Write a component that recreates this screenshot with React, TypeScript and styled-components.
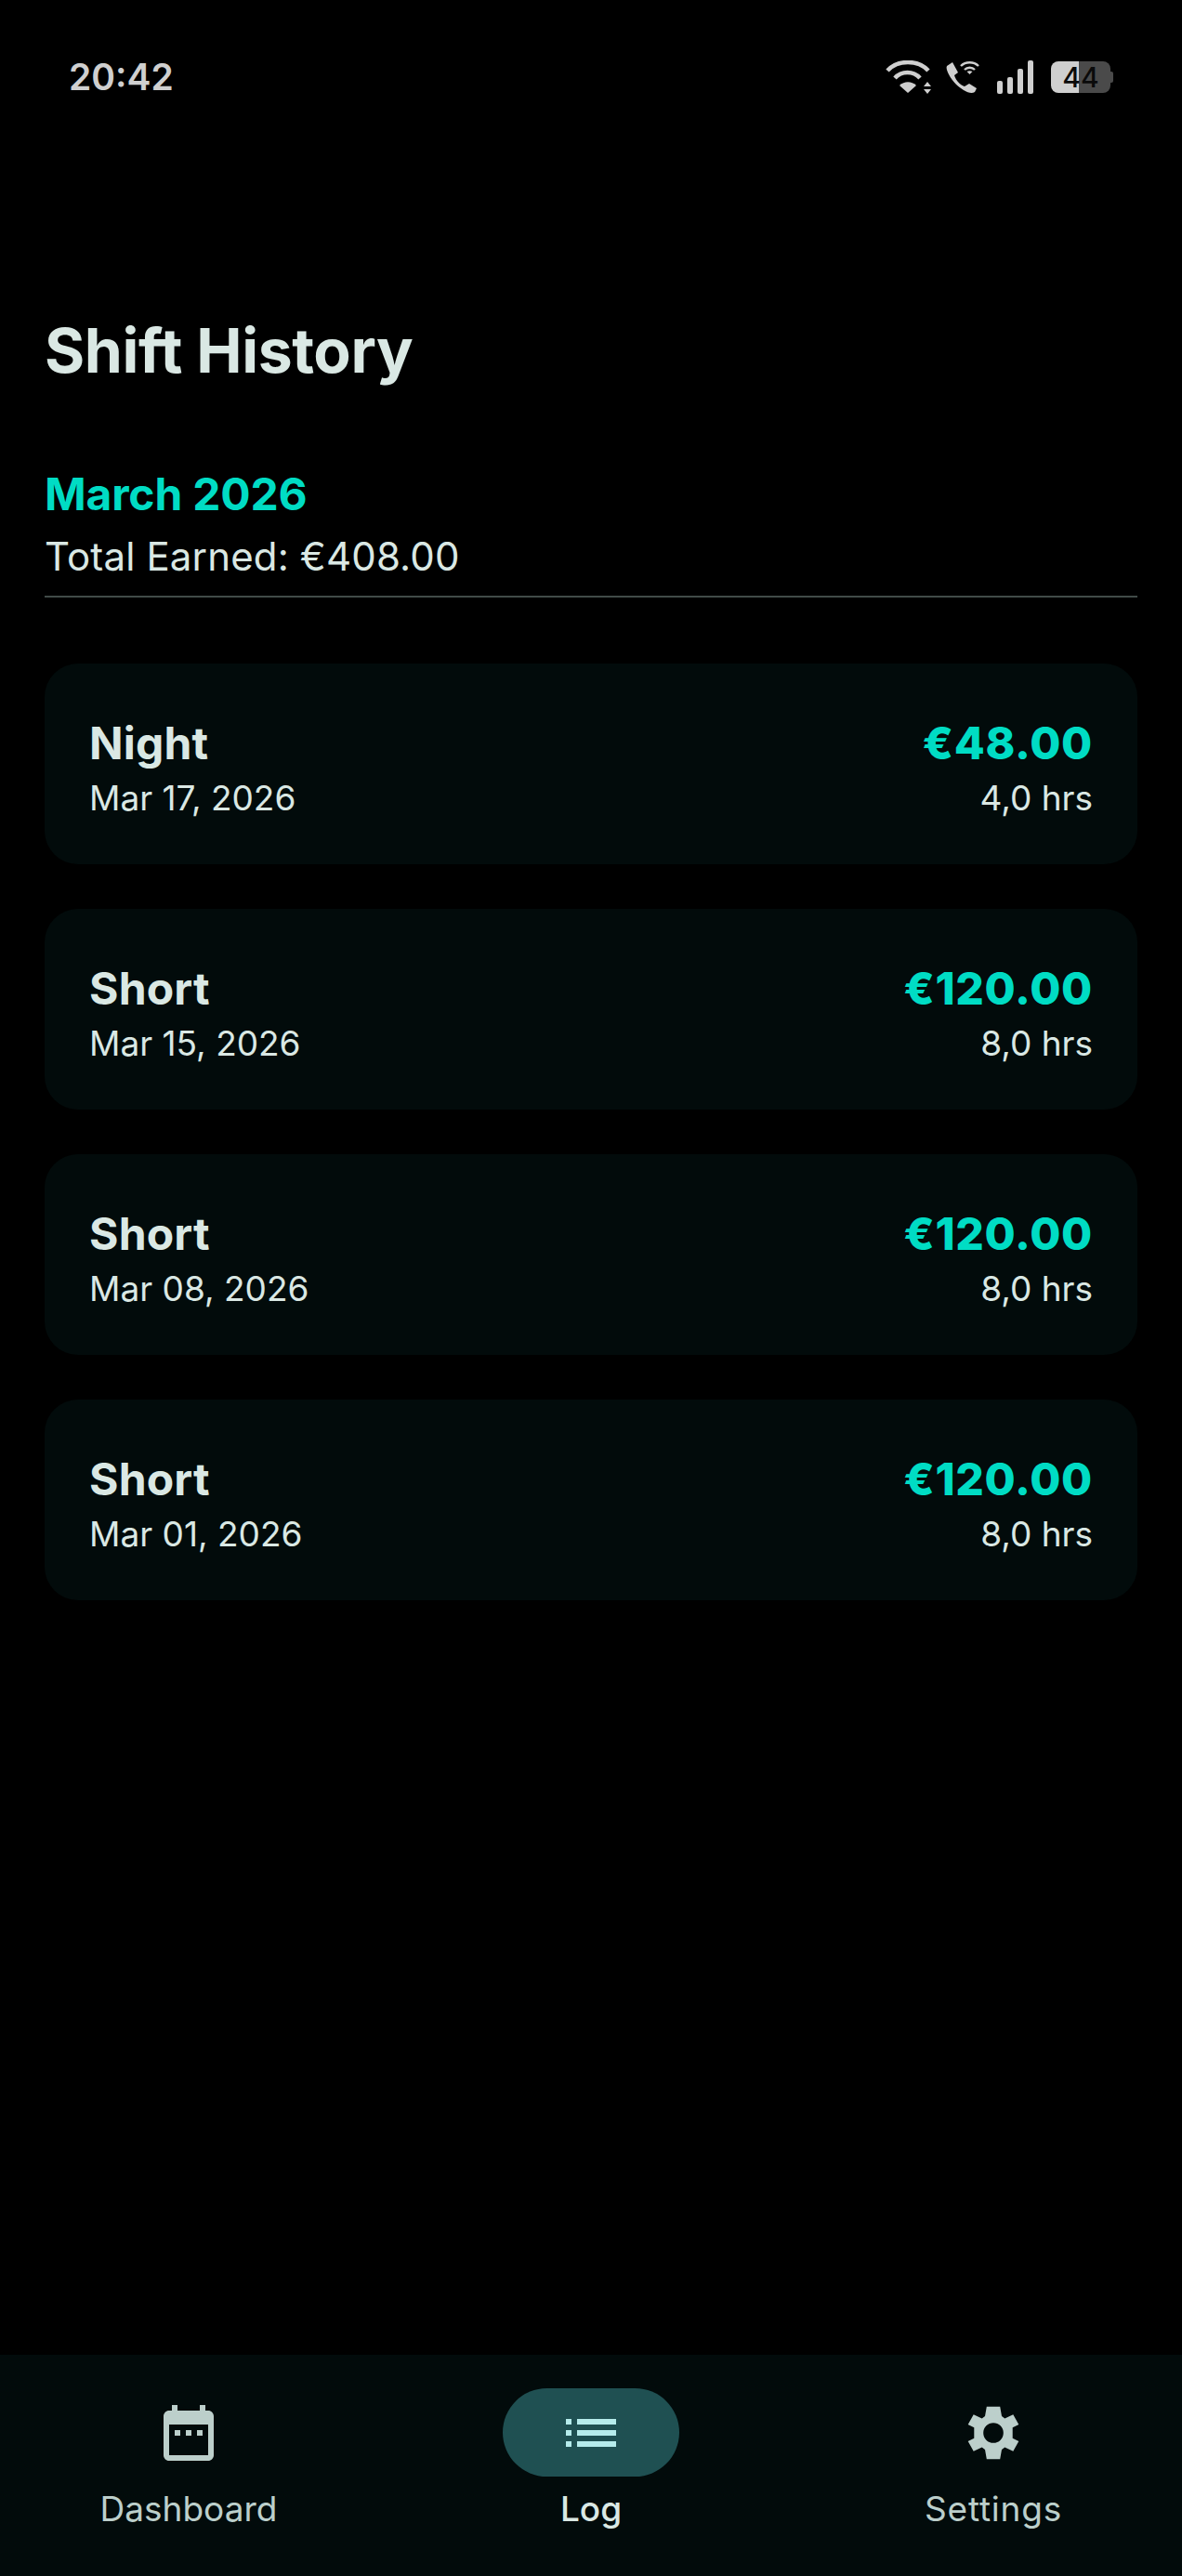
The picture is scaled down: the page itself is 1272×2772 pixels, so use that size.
import styled, { createGlobalStyle } from 'styled-components';

const GlobalStyle = createGlobalStyle`
  html, body {
    margin: 0;
    padding: 0;
    background: #000;
  }
  * {
    box-sizing: border-box;
  }
`;

const shifts = [
  { name: 'Night', date: 'Mar 17, 2026', amount: '€48.00', hours: '4,0 hrs' },
  { name: 'Short', date: 'Mar 15, 2026', amount: '€120.00', hours: '8,0 hrs' },
  { name: 'Short', date: 'Mar 08, 2026', amount: '€120.00', hours: '8,0 hrs' },
  { name: 'Short', date: 'Mar 01, 2026', amount: '€120.00', hours: '8,0 hrs' },
];

const StatusIcons = () => (
  <StatusRight>
    <ConnectivityGroup>
      <svg width="50" height="36" viewBox="0 0 50 36" fill="none">
        <path d="M2 11C13 -1 35 -1 46 11" stroke="#cfcfcf" strokeWidth="4.500" />
        <path d="M10 19C17 11 30 11 37 19" stroke="#cfcfcf" strokeWidth="4.500" />
        <path d="M24 35L15 27C20 22 28 22 33 27Z" fill="#cfcfcf" />
        <path d="M41 28L49 28L45 23Z M41 31L49 31L45 36Z" fill="#cfcfcf" />
      </svg>
      <svg width="36" height="36" viewBox="0 0 36 36" fill="none">
        <path
          d="M1 6L7 2L13 13L9 16C11 22 15 26 20 28L25 25L33 30L31 34C28 36 24 35 19 32C11 27 5 20 2 13C1 10 0 8 1 6Z"
          fill="#cfcfcf"
        />
        <path d="M16 6C21 1 30 1 35 6" stroke="#cfcfcf" strokeWidth="2.400" />
        <path d="M20 10C23 7 28 7 31 10" stroke="#cfcfcf" strokeWidth="2.400" />
        <path d="M25.500 15L22.500 12C24.500 11 26.500 11 28.500 12Z" fill="#cfcfcf" />
      </svg>
    </ConnectivityGroup>
    <SignalBars>
      <SignalBar $height={14} />
      <SignalBar $height={18} />
      <SignalBar $height={27} />
      <SignalBar $height={36} />
    </SignalBars>
    <Battery>
      <BatteryLevel>44</BatteryLevel>
    </Battery>
  </StatusRight>
);

const CalendarIcon = () => (
  <svg width="72" height="72" viewBox="0 0 24 24" fill="#bccfcb">
    <path d="M19 4h-1V2h-2v2H8V2H6v2H5c-1.100 0-2 .9-2 2v14c0 1.100.9 2 2 2h14c1.100 0 2-.9 2-2V6c0-1.100-.9-2-2-2zm0 16H5V9h14v11zM7 11h2v2H7zm4 0h2v2h-2zm4 0h2v2h-2z" />
  </svg>
);

const ListIcon = () => (
  <svg width="72" height="72" viewBox="0 0 24 24" fill="#b6ecec">
    <path d="M3 13h2v-2H3v2zm0 4h2v-2H3v2zm0-8h2V7H3v2zm4 4h14v-2H7v2zm0 4h14v-2H7v2zM7 7v2h14V7H7z" />
  </svg>
);

const GearIcon = () => (
  <svg width="72" height="72" viewBox="0 0 24 24" fill="#bccfcb">
    <path
      d="M9.600 2.600H14.400L15 6L16.100 6.800L19.100 5.400L21.100 9L18.900 10.100V13.900L21.100 15L19.100 18.600L16.100 17.200L15 18L14.400 21.400H9.600L9 18L7.900 17.200L4.900 18.600L2.900 15L5.100 13.900V10.100L2.900 9L4.900 5.400L7.900 6.800L9 6ZM12 8.400a3.600 3.600 0 1 0 0 7.200 3.600 3.600 0 0 0 0-7.200Z"
      fillRule="evenodd"
    />
  </svg>
);

const App = () => {
  return (
    <Page>
      <GlobalStyle />
      <StatusBar>
        <Clock>20:42</Clock>
        <StatusIcons />
      </StatusBar>
      <Content>
        <Title>Shift History</Title>
        <MonthHeader>
          <MonthName>March 2026</MonthName>
          <MonthTotal>Total Earned: €408.00</MonthTotal>
        </MonthHeader>
        <ShiftList>
          {shifts.map((shift) => (
            <ShiftCard key={shift.date}>
              <ShiftColumn>
                <ShiftName>{shift.name}</ShiftName>
                <ShiftDetail>{shift.date}</ShiftDetail>
              </ShiftColumn>
              <ShiftColumn $right>
                <ShiftAmount>{shift.amount}</ShiftAmount>
                <ShiftDetail>{shift.hours}</ShiftDetail>
              </ShiftColumn>
            </ShiftCard>
          ))}
        </ShiftList>
      </Content>
      <BottomNav>
        <NavItem>
          <NavIndicator>
            <CalendarIcon />
          </NavIndicator>
          <NavLabel>Dashboard</NavLabel>
        </NavItem>
        <NavItem>
          <NavIndicator $active>
            <ListIcon />
          </NavIndicator>
          <NavLabel $active>Log</NavLabel>
        </NavItem>
        <NavItem>
          <NavIndicator>
            <GearIcon />
          </NavIndicator>
          <NavLabel $spaced>Settings</NavLabel>
        </NavItem>
      </BottomNav>
    </Page>
  );
};

export default App;

const Page = styled.div`
  width: 1272px;
  height: 2772px;
  background: #000;
  display: flex;
  flex-direction: column;
  font-family: Inter, 'Liberation Sans', sans-serif;
`;

const StatusBar = styled.div`
  height: 101px;
  padding: 65px 77px 0 74px;
  display: flex;
  justify-content: space-between;
  align-items: center;
`;

const Clock = styled.div`
  color: #cfcfcf;
  font-size: 39px;
  font-weight: 600;
  line-height: 36px;
`;

const StatusRight = styled.div`
  display: flex;
  align-items: center;
  gap: 19px;
`;

const ConnectivityGroup = styled.div`
  display: flex;
  align-items: center;
  gap: 15px;
`;

const SignalBars = styled.div`
  display: flex;
  align-items: flex-end;
  gap: 5px;
  height: 36px;
`;

const SignalBar = styled.div<{ $height: number }>`
  width: 6px;
  height: ${(p) => p.$height}px;
  border-radius: 2px;
  background: #cfcfcf;
`;

const Battery = styled.div`
  position: relative;
  width: 64px;
  height: 34px;
  border-radius: 8px;
  background: linear-gradient(90deg, #cfcfcf 0 30px, #4a4a4a 30px);

  &::after {
    content: '';
    position: absolute;
    right: -3px;
    top: 11px;
    width: 3px;
    height: 12px;
    border-radius: 0 2px 2px 0;
    background: #4a4a4a;
  }
`;

const BatteryLevel = styled.div`
  color: #0a0a0a;
  font-size: 30px;
  font-weight: 500;
  line-height: 34px;
  text-align: center;
`;

const Content = styled.main`
  flex: 1;
  padding: 0 48px;
`;

const Title = styled.h1`
  margin: 243px 0 0;
  color: #dae8e4;
  font-size: 66px;
  font-weight: 700;
  line-height: 66px;
  letter-spacing: -0.4px;
`;

const MonthHeader = styled.div`
  margin-top: 97px;
  padding-bottom: 17px;
  border-bottom: 2px solid #414b48;
`;

const MonthName = styled.div`
  color: #00dcc4;
  font-size: 48px;
  font-weight: 700;
  line-height: 50px;
  letter-spacing: -0.2px;
`;

const MonthTotal = styled.div`
  margin-top: 17px;
  color: #dae8e4;
  font-size: 42px;
  line-height: 50px;
  letter-spacing: 0.15px;
`;

const ShiftList = styled.div`
  margin-top: 71px;
  display: flex;
  flex-direction: column;
  gap: 48px;
`;

const ShiftCard = styled.div`
  height: 216px;
  padding: 10px 48px 0;
  border-radius: 36px;
  background: #020b0b;
  display: flex;
  justify-content: space-between;
  align-items: center;
`;

const ShiftColumn = styled.div<{ $right?: boolean }>`
  display: flex;
  flex-direction: column;
  gap: 8px;
  align-items: ${(p) => (p.$right ? 'flex-end' : 'flex-start')};
`;

const ShiftName = styled.div`
  color: #dae8e4;
  font-size: 48px;
  font-weight: 700;
  line-height: 56px;
  letter-spacing: 0.2px;
`;

const ShiftAmount = styled.div`
  color: #00dcc4;
  font-size: 48px;
  font-weight: 800;
  line-height: 56px;
  letter-spacing: 0.7px;
`;

const ShiftDetail = styled.div`
  color: #dae8e4;
  font-size: 37px;
  line-height: 46px;
`;

const BottomNav = styled.nav`
  height: 238px;
  background: #020b0b;
  display: flex;
  justify-content: space-between;
  padding: 36px 108px 0;
`;

const NavItem = styled.div`
  width: 190px;
  display: flex;
  flex-direction: column;
  align-items: center;
  gap: 12px;
`;

const NavIndicator = styled.div<{ $active?: boolean }>`
  width: 190px;
  height: 95px;
  border-radius: 48px;
  display: flex;
  align-items: center;
  justify-content: center;
  background: ${(p) => (p.$active ? '#1f5052' : 'transparent')};
`;

const NavLabel = styled.div<{ $active?: boolean; $spaced?: boolean }>`
  color: ${(p) => (p.$active ? '#dae8e4' : '#bccfcb')};
  font-size: 37px;
  font-weight: ${(p) => (p.$active ? 500 : 400)};
  line-height: 46px;
  letter-spacing: ${(p) => (p.$spaced ? '0.8px' : '0')};
  white-space: nowrap;
`;
